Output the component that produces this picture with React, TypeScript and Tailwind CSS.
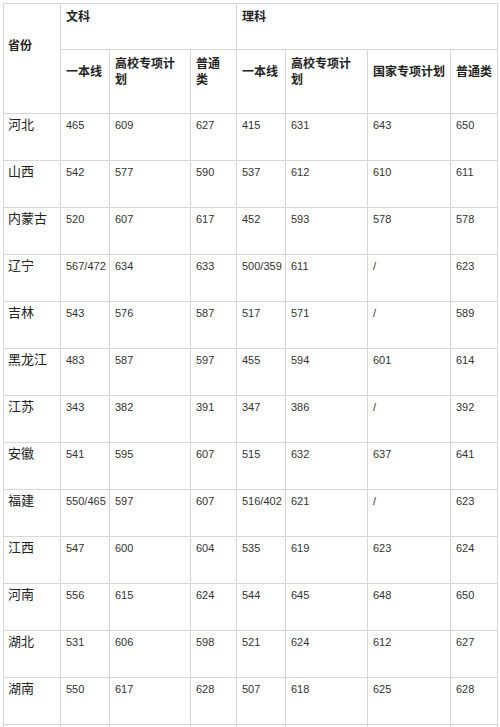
import React from "react";

const rows: [string, string[]][] = [
  ["河北", ["465", "609", "627", "415", "631", "643", "650"]],
  ["山西", ["542", "577", "590", "537", "612", "610", "611"]],
  ["内蒙古", ["520", "607", "617", "452", "593", "578", "578"]],
  ["辽宁", ["567/472", "634", "633", "500/359", "611", "/", "623"]],
  ["吉林", ["543", "576", "587", "517", "571", "/", "589"]],
  ["黑龙江", ["483", "587", "597", "455", "594", "601", "614"]],
  ["江苏", ["343", "382", "391", "347", "386", "/", "392"]],
  ["安徽", ["541", "595", "607", "515", "632", "637", "641"]],
  ["福建", ["550/465", "597", "607", "516/402", "621", "/", "623"]],
  ["江西", ["547", "600", "604", "535", "619", "623", "624"]],
  ["河南", ["556", "615", "624", "544", "645", "648", "650"]],
  ["湖北", ["531", "606", "598", "521", "624", "612", "627"]],
  ["湖南", ["550", "617", "628", "507", "618", "625", "628"]],
  ["", ["", "", "", "", "", "", ""]],
];

const cjk = "font-['Noto_Sans_CJK_SC','Noto_Sans',sans-serif]";
const num = "font-['Liberation_Sans','Noto_Sans_CJK_SC',sans-serif]";

function H2({ children }: { children: React.ReactNode }) {
  return (
    <div className="bg-white pl-[5px] pt-[5px]">
      <div className={`h-[32px] flex items-center text-[12px] leading-[16px] font-bold text-[#222] ${cjk}`}>
        <div>{children}</div>
      </div>
    </div>
  );
}

export default function App() {
  return (
    <div className="w-[500px] h-[727px] overflow-hidden bg-white">
      <div className="ml-[3px] mt-[3px] w-[495px] grid grid-cols-[56px_48px_80px_45px_48px_81px_82px_46px] grid-rows-[45px_63px] auto-rows-[46px] gap-px p-px bg-[#d7d7d7]">
        <div className={`row-span-2 bg-white pl-[4px] pt-[33px] text-[12px] leading-[16px] font-bold text-[#222] ${cjk}`}>省份</div>
        <div className={`col-span-3 bg-white pl-[5px] pt-[4px] text-[12px] leading-[16px] font-bold text-[#222] ${cjk}`}>文科</div>
        <div className={`col-span-4 bg-white pl-[5px] pt-[4px] text-[12px] leading-[16px] font-bold text-[#222] ${cjk}`}>理科</div>
        <H2>一本线</H2>
        <H2>高校专项计<br />划</H2>
        <H2>普通<br />类</H2>
        <H2>一本线</H2>
        <H2>高校专项计<br />划</H2>
        <H2>国家专项计划</H2>
        <H2>普通类</H2>
        {rows.map(([p, vals], i) => (
          <React.Fragment key={i}>
            <div className={`bg-white pl-[4px] pt-[1px] text-[13px] leading-[18px] text-[#222] ${cjk}`}>{p}</div>
            {vals.map((v, j) => (
              <div key={j} className={`bg-white pl-[5px] pt-[2px] text-[11px] leading-[18px] text-[#333] ${num}`}>{v}</div>
            ))}
          </React.Fragment>
        ))}
      </div>
    </div>
  );
}
